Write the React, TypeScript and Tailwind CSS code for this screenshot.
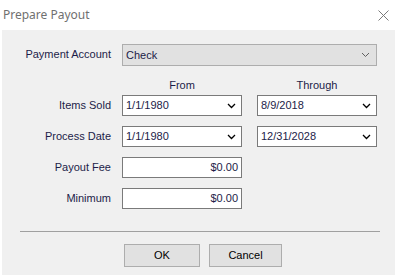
import React from "react";

function Chevron({ light }: { light?: boolean }) {
  return (
    <svg width="9" height="6" viewBox="0 0 9 6" className="shrink-0">
      <polyline
        points="1,1 4.5,4.5 8,1"
        fill="none"
        stroke={light ? "#606060" : "#000"}
        strokeWidth={light ? 1 : 1.3}
      />
    </svg>
  );
}

function DateBox({ value }: { value: string }) {
  return (
    <div className="flex h-[21px] items-center justify-between border border-[#7a7a7a] bg-white pl-[3px] pr-[5px]">
      <span>{value}</span>
      <Chevron />
    </div>
  );
}

function MoneyBox({ value }: { value: string }) {
  return (
    <div className="flex h-[21px] items-center justify-end border border-[#7a7a7a] bg-white pr-[3px]">
      {value}
    </div>
  );
}

function Label({ children }: { children: React.ReactNode }) {
  return <div className="flex h-[21px] items-center justify-end pr-[11px]">{children}</div>;
}

export default function App() {
  return (
    <div
      className="flex h-[279px] w-[397px] flex-col bg-white text-[11px] text-[#1c1c48]"
      style={{ fontFamily: '"Liberation Sans", Arial, sans-serif' }}
    >
      <div className="flex h-[30px] items-center justify-between pl-[3px] pr-[8px]">
        <span className="text-[12px] text-[#707070]" style={{ fontFamily: '"Noto Sans", sans-serif' }}>
          Prepare Payout
        </span>
        <svg width="11" height="11" viewBox="0 0 11 11">
          <path d="M0.5 0.5 L10.5 10.5 M10.5 0.5 L0.5 10.5" stroke="#7a7a7a" strokeWidth="1" fill="none" />
        </svg>
      </div>

      <div className="mx-[2px] flex h-[245px] flex-col bg-[#f0f0f0] pt-[14px]">
        <div className="grid grid-cols-[120px_120px_15px_120px]">
          <Label>Payment Account</Label>
          <div className="col-span-3 flex h-[22px] items-center justify-between border border-[#adadad] bg-[#e1e1e1] pl-[3px] pr-[6px]">
            <span>Check</span>
            <Chevron light />
          </div>

          <div className="h-[29px]" />
          <div className="h-[29px] pt-[11px] text-center">From</div>
          <div />
          <div className="h-[29px] pt-[11px] text-center">Through</div>
        </div>

        <div className="grid grid-cols-[120px_120px_15px_120px] gap-y-[10px]">
          <Label>Items Sold</Label>
          <DateBox value="1/1/1980" />
          <div />
          <DateBox value="8/9/2018" />

          <Label>Process Date</Label>
          <DateBox value="1/1/1980" />
          <div />
          <DateBox value="12/31/2028" />

          <Label>Payout Fee</Label>
          <MoneyBox value="$0.00" />
          <div />
          <div />

          <Label>Minimum</Label>
          <MoneyBox value="$0.00" />
          <div />
          <div />
        </div>

        <div className="ml-[18px] mr-[15px] mt-[22px] h-px bg-[#a0a0a0]" />

        <div className="mt-[12px] flex gap-[9px] pl-[122px]">
          <button className="h-[23px] w-[76px] border border-[#adadad] bg-[#e1e1e1] text-[11px] text-black">OK</button>
          <button className="h-[23px] w-[73px] border border-[#adadad] bg-[#e1e1e1] text-[11px] text-black">Cancel</button>
        </div>
      </div>
    </div>
  );
}
